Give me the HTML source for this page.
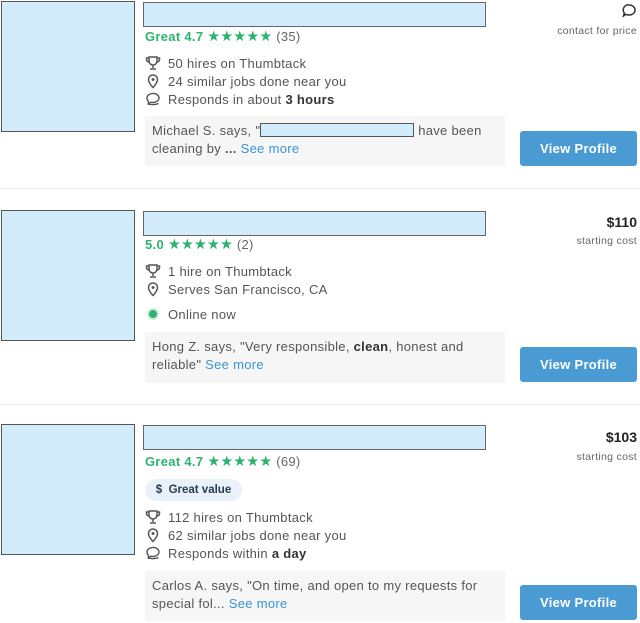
<!DOCTYPE html><html><head><style>
body{margin:0;width:640px;height:623px;background:#fff;font-family:"Liberation Sans",sans-serif;font-size:13px;letter-spacing:0.3px;color:#555;position:relative;overflow:hidden}
.a{position:absolute}
.img{background:#d3ecfb;border:1.5px solid #555;box-sizing:border-box}
.ttl{background:#d3ecfb;border:1.5px solid #666;box-sizing:border-box;left:143px;width:343px;height:25px}
.rt{left:145px;color:#2db36f;font-weight:bold;font-size:13px;white-space:nowrap}
.rt .n{color:#666;font-weight:normal}
.st{color:#2db36f;letter-spacing:0;font-weight:normal;font-size:14.5px}
.ln{left:145px;white-space:nowrap;height:18px;line-height:18px}
.ln svg{vertical-align:-3px;margin-right:7px}
.q{left:145px;width:360px;background:#f6f6f6;box-sizing:border-box;padding:6px 7px;line-height:18px;color:#555}
.q a{color:#3a93d6}
.btn{left:520px;width:117px;height:35px;background:#4a9ad4;color:#fff;font-weight:bold;font-size:13px;text-align:center;line-height:35px;border-radius:3px}
.pr{right:3px;text-align:right;color:#222;font-weight:bold;font-size:14px;letter-spacing:0}
.sc{right:3px;text-align:right;font-size:10.5px;color:#666}
.hr{left:0;width:640px;height:1px;background:#e6e6e6}
.blank{display:inline-block;background:#d3ecfb;border:1px solid #555;height:12px;vertical-align:-2px}
</style></head><body>
<svg width="0" height="0" style="position:absolute"><defs>
<g id="tr"><path d="M4 2h8v4a4 4 0 0 1-8 0z M4 3H1.5v1.5a2.5 2.5 0 0 0 2.7 2.5 M12 3h2.5v1.5a2.5 2.5 0 0 1-2.7 2.5 M8 10v3 M5 14h6" fill="none" stroke="#555" stroke-width="1.5"/></g>
<g id="pin"><path d="M8 14.5s-4.5-4.5-4.5-8a4.5 4.5 0 0 1 9 0c0 3.5-4.5 8-4.5 8z" fill="none" stroke="#555" stroke-width="1.5"/><circle cx="8" cy="6.5" r="1.5" fill="#555"/></g>
<g id="ch"><path d="M2 7a6 4.5 0 1 1 4 4.2L3.5 13V10.5A4.5 4.5 0 0 1 2 7z M2.5 12.5c3 1.5 8 1.5 11 0" fill="none" stroke="#555" stroke-width="1.4"/></g>
</defs></svg>

<!-- card 1 -->
<div class="a img" style="left:1px;top:1px;width:134px;height:131px"></div>
<div class="a ttl" style="top:2px"></div>
<div class="a rt" style="top:29px">Great 4.7 <span class="st">★★★★★</span> <span class="n">(35)</span></div>
<div class="a ln" style="top:55px"><svg width="16" height="16"><use href="#tr"/></svg>50 hires on Thumbtack</div>
<div class="a ln" style="top:73px"><svg width="16" height="16"><use href="#pin"/></svg>24 similar jobs done near you</div>
<div class="a ln" style="top:91px"><svg width="16" height="16"><use href="#ch"/></svg>Responds in about <b style="color:#333">3 hours</b></div>
<div class="a q" style="top:116px;height:50px">Michael S. says, "<span class="blank" style="width:152px"></span> have been cleaning by <b>...</b> <a>See more</a></div>
<div class="a btn" style="top:131px">View Profile</div>
<svg class="a" style="left:621px;top:3px" width="16" height="16"><path d="M8 2a6 5 0 1 1-3 9.3L2.5 13l.8-3A5 5 0 0 1 8 2z" fill="none" stroke="#333" stroke-width="1.5"/></svg>
<div class="a sc" style="top:25px">contact for price</div>
<div class="a hr" style="top:188px"></div>

<!-- card 2 -->
<div class="a img" style="left:1px;top:210px;width:134px;height:131px"></div>
<div class="a ttl" style="top:211px"></div>
<div class="a rt" style="top:237px">5.0 <span class="st">★★★★★</span> <span class="n">(2)</span></div>
<div class="a ln" style="top:263px"><svg width="16" height="16"><use href="#tr"/></svg>1 hire on Thumbtack</div>
<div class="a ln" style="top:281px"><svg width="16" height="16"><use href="#pin"/></svg>Serves San Francisco, CA</div>
<div class="a ln" style="top:306px"><svg width="16" height="16"><circle cx="8" cy="8" r="6" fill="#cdebd9"/><circle cx="8" cy="8" r="4" fill="#2db36f"/></svg>Online now</div>
<div class="a q" style="top:332px;height:51px">Hong Z. says, "Very responsible, <b style="color:#333">clean</b>, honest and<br>reliable" <a>See more</a></div>
<div class="a btn" style="top:347px">View Profile</div>
<div class="a pr" style="top:214px">$110</div>
<div class="a sc" style="top:235px">starting cost</div>
<div class="a hr" style="top:404px"></div>

<!-- card 3 -->
<div class="a img" style="left:1px;top:424px;width:134px;height:131px"></div>
<div class="a ttl" style="top:425px"></div>
<div class="a rt" style="top:454px">Great 4.7 <span class="st">★★★★★</span> <span class="n">(69)</span></div>
<div class="a" style="left:145px;top:479px;width:97px;height:22px;background:#e9f1fb;border-radius:11px;color:#2a3a50;font-weight:bold;font-size:11.5px;letter-spacing:0;line-height:22px;text-align:center">$&nbsp; Great value</div>
<div class="a ln" style="top:509px"><svg width="16" height="16"><use href="#tr"/></svg>112 hires on Thumbtack</div>
<div class="a ln" style="top:527px"><svg width="16" height="16"><use href="#pin"/></svg>62 similar jobs done near you</div>
<div class="a ln" style="top:545px"><svg width="16" height="16"><use href="#ch"/></svg>Responds within <b style="color:#333">a day</b></div>
<div class="a q" style="top:571px;height:50px">Carlos A. says, "On time, and open to my requests for<br>special fol... <a>See more</a></div>
<div class="a btn" style="top:585px">View Profile</div>
<div class="a pr" style="top:429px">$103</div>
<div class="a sc" style="top:451px">starting cost</div>
</body></html>
